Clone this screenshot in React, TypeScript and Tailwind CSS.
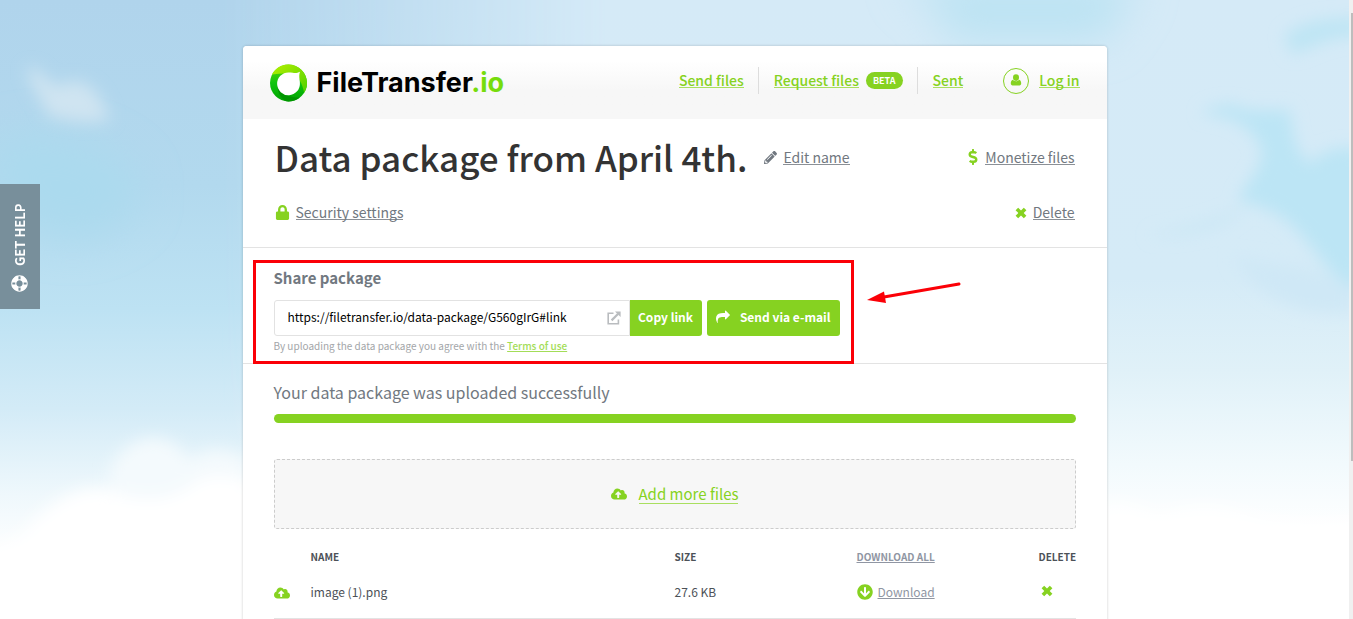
import { FunctionComponent, ReactNode } from "react";
import {
  FaArrowCircleDown,
  FaCloudUploadAlt,
  FaDollarSign,
  FaLifeRing,
  FaLock,
  FaPencilAlt,
} from "react-icons/fa";

interface PackageFile {
  name: string;
  size: string;
}

interface IconProps {
  className?: string;
}

const files: PackageFile[] = [{ name: "image (1).png", size: "27.6 KB" }];

const CrossIcon: FunctionComponent<IconProps> = ({ className }) => (
  <svg viewBox="0 0 12 12" fill="currentColor" className={className}>
    <path d="M3.2.8 6 3.4 8.8.8l2.6 2.4L8.7 6l2.7 2.8-2.6 2.4L6 8.6l-2.8 2.6L.6 8.8 3.3 6 .6 3.2z" />
  </svg>
);

const UserIcon: FunctionComponent<IconProps> = ({ className }) => (
  <svg viewBox="0 0 12 12" fill="currentColor" className={className}>
    <ellipse cx="6" cy="3.6" rx="3" ry="3.300" />
    <path d="M3 5.800C1.200 6.200.8 8 .8 9.600.8 10.800 1.500 11.400 2.500 11.400h7c1 0 1.700-.6 1.700-1.800 0-1.600-.4-3.400-2.200-3.800C8.200 6.800 7.200 7.200 6 7.200S3.800 6.800 3 5.800z" />
  </svg>
);

const ForwardIcon: FunctionComponent<IconProps> = ({ className }) => (
  <svg viewBox="0 0 1792 1792" fill="currentColor" className={className}>
    <path d="M1792 640q0 26-19 45l-512 512q-19 19-45 19t-45-19-19-45v-256h-224q-98 0-175.500 6t-154 21.500-133 42.500-105.500 69.500-80 101-48.500 138.500-17.500 181q0 55 5 123 0 6 2.500 23.500t2.500 26.500q0 15-8.500 25t-23.500 10q-16 0-28-17-7-9-13-22t-13.500-30-10.500-24q-127-285-127-451 0-199 53-333 162-403 875-403h224v-256q0-26 19-45t45-19 45 19l512 512q19 19 19 45z" />
  </svg>
);

const ExternalIcon: FunctionComponent<IconProps> = ({ className }) => (
  <svg
    viewBox="0 0 14 14"
    fill="none"
    stroke="currentColor"
    strokeWidth="1.6"
    className={className}
  >
    <path d="M6.500 2.200H1.200v10.600h10.200V8.500" />
    <path d="M4.600 9.400l6.600-6.600" strokeWidth="2.200" />
    <path d="M8 .4h5.600V6z" fill="currentColor" stroke="none" />
  </svg>
);

const LogoMark: FunctionComponent = () => (
  <svg viewBox="0 0 40 38" className="h-[38px] w-10">
    <defs>
      <linearGradient id="ring" x1="0" y1="0" x2="0" y2="1">
        <stop offset="0" stopColor="#5fd800" />
        <stop offset="0.5" stopColor="#10c410" />
        <stop offset="1" stopColor="#00a300" />
      </linearGradient>
      <linearGradient id="top" x1="0" y1="0" x2="1" y2="1">
        <stop offset="0" stopColor="#b4f000" />
        <stop offset="1" stopColor="#4fd000" />
      </linearGradient>
    </defs>
    <circle cx="19.500" cy="19" r="18.5" fill="url(#ring)" />
    <path
      d="M3 10.500C6 4.500 12 .5 19.500 .5c10.200 0 18.500 8.300 18.500 18.500 0 3.600-1 7-2.800 9.800C34 24 33 20 31 17L28 10 14 9.500C8.500 9.700 6 10 3 10.500z"
      fill="url(#top)"
    />
    <path
      d="M8 19c.5 8 9 15 23 14.500a18.500 18.500 0 0 1-11.500 4C14 37.500 8.500 31 8 19z"
      fill="#009600"
    />
    <path
      d="M31 7.800c-1 3-.8 5-.5 7.700.3 1.300.4 2.500.4 3.500a11.400 11.400 0 1 1-11.400-10.600c1.500 0 2.800.2 4.300.4 2.700.5 4.600.2 7.200-1z"
      fill="#fff"
    />
  </svg>
);

const Sky: FunctionComponent = () => (
  <svg
    viewBox="0 0 1353 619"
    preserveAspectRatio="none"
    className="absolute inset-0 size-full"
    aria-hidden="true"
  >
    <defs>
      <linearGradient id="left" x1="0" y1="0" x2="0" y2="1">
        <stop offset="0" stopColor="#b0d4ec" />
        <stop offset="0.3" stopColor="#b2d9ee" />
        <stop offset="0.5" stopColor="#bde2f3" />
        <stop offset="0.66" stopColor="#d3ebf7" />
        <stop offset="0.8" stopColor="#eff8fc" />
        <stop offset="0.9" stopColor="#fff" />
      </linearGradient>
      <linearGradient id="right" x1="0" y1="0" x2="0" y2="1">
        <stop offset="0" stopColor="#d5eaf7" />
        <stop offset="0.45" stopColor="#d5ebf7" />
        <stop offset="0.6" stopColor="#e0f1f8" />
        <stop offset="0.75" stopColor="#f2fafd" />
        <stop offset="0.86" stopColor="#fff" />
      </linearGradient>
      <linearGradient id="fade" x1="0" y1="0" x2="1" y2="0">
        <stop offset="0.16" stopColor="#fff" stopOpacity="0" />
        <stop offset="0.45" stopColor="#fff" />
      </linearGradient>
      <mask id="toRight">
        <rect width="1353" height="619" fill="url(#fade)" />
      </mask>
      <filter id="soft" x="-30%" y="-30%" width="160%" height="160%">
        <feGaussianBlur stdDeviation="8" />
      </filter>
      <filter id="softer" x="-40%" y="-40%" width="180%" height="180%">
        <feGaussianBlur stdDeviation="20" />
      </filter>
    </defs>
    <rect width="1353" height="619" fill="url(#left)" />
    <rect width="1353" height="619" fill="url(#right)" mask="url(#toRight)" />
    <g filter="url(#softer)">
      <path d="M-10 150c40-30 110-10 140 20 30 40-20 60-50 70-50 0-90-40-90-90z" fill="#abdaee" />
      <path d="M900 -20h240c-14 24-20 40-40 60H940c20-14 0-30-40-60z" fill="#bce3f3" />
    </g>
    <g filter="url(#soft)">
      <path d="M28 68c12-2 16 14 30 18 24-12 40 0 52 34-16 4-40 2-62-4-4-16-22-34-20-48z" fill="#cfe4f1" />
      <path d="M1200 114c20-14 36-10 48-4h42c4 30 6 44 22 54 8-14 30-20 50-14v140c-30-6-44-40-60-54-20-24-40-30-64-36 10-20 24-30 24-50-8-20-24-34-62-36z" fill="#bce5f5" />
      <path d="M1146 236c30-6 70-14 100-30-20 24-60 30-100 30z" fill="#c8e6f4" />
      <path d="M1232 256c30 6 90 12 120 30v26c-40 4-90-6-120-56z" fill="#cfe8f6" />
      <path d="M1284 36c20-16 40-18 80-18v18c-40 0-54 14-72 18z" fill="#bee5f4" />
      <path d="M110 470c20-40 60-40 80-10 20-16 40-10 60 0v60H110z" fill="#f4fafd" />
      <path d="M-20 640v-90c20 0 40-8 50-24 20-22 50-44 80-36 30 14 60 10 80-4 14-14 40-14 70 0v154z" fill="#fff" />
      <path d="M1100 640V506c20-6 40 4 60 10 40-14 70-8 100 4 40 6 70 4 120 0v120z" fill="#fff" />
    </g>
  </svg>
);

interface LinkProps {
  children: ReactNode;
}

const NavLink: FunctionComponent<LinkProps> = ({ children }) => (
  <a
    href="#"
    className="border-b border-[#a9df5f] text-sm leading-[14px] font-medium text-[#86d221]"
  >
    {children}
  </a>
);

const GreyLink: FunctionComponent<LinkProps> = ({ children }) => (
  <a
    href="#"
    className="border-b border-[#8b9096] text-sm leading-[14px] text-[#717880]"
  >
    {children}
  </a>
);

const Header: FunctionComponent = () => (
  <header className="flex h-[73px] items-center justify-between rounded-t bg-linear-to-b from-white from-20% to-[#f7f7f7] to-60% pr-[27px] pl-[26px]">
    <a href="#" className="flex items-center gap-2">
      <LogoMark />
      <span className="font-[Inter,sans-serif] text-[27px] leading-8 font-bold text-black">
        FileTransfer<span className="text-[#76dc0c]">.io</span>
      </span>
    </a>
    <nav className="flex items-center pb-1">
      <NavLink>Send files</NavLink>
      <span className="mr-[15px] ml-[14px] h-[27px] w-px bg-[#ddd]" />
      <NavLink>Request files</NavLink>
      <span className="ml-[7px] rounded-full bg-[#86d221] px-[7px] text-[9px] leading-[17px] font-bold text-white">
        BETA
      </span>
      <span className="mr-[15px] ml-[14px] h-[27px] w-px bg-[#ddd]" />
      <NavLink>Sent</NavLink>
      <span className="mr-[10px] ml-10 flex size-[26px] items-center justify-center rounded-full border border-[#86d221]">
        <UserIcon className="mb-px size-3 text-[#86d221]" />
      </span>
      <NavLink>Log in</NavLink>
    </nav>
  </header>
);

const PackageInfo: FunctionComponent = () => (
  <section className="h-[129px] border-b border-[#e3e3e3] px-8 pt-[15px]">
    <div className="flex items-center justify-between">
      <div className="flex items-center">
        <h1 className="text-[35px] leading-[46px] font-medium text-[#333]">
          Data package from April 4th.
        </h1>
        <FaPencilAlt className="mr-[6px] ml-[17px] size-[13px] text-[#717880]" />
        <GreyLink>Edit name</GreyLink>
      </div>
      <div className="flex items-center">
        <FaDollarSign className="mr-1 size-4 text-[#86d221]" />
        <GreyLink>Monetize files</GreyLink>
      </div>
    </div>
    <div className="mt-[25px] flex items-center justify-between">
      <div className="flex items-center">
        <FaLock className="mr-[6px] size-[15px] text-[#86d221]" />
        <GreyLink>Security settings</GreyLink>
      </div>
      <div className="flex items-center">
        <CrossIcon className="mr-[6px] size-3 text-[#86d221]" />
        <GreyLink>Delete</GreyLink>
      </div>
    </div>
  </section>
);

const SharePackage: FunctionComponent = () => (
  <section className="relative h-[116px] border-b border-[#e3e3e3] px-[31px] pt-5">
    <h2 className="text-[15px] leading-5 font-bold text-[#717880]">
      <label htmlFor="share-link">Share package</label>
    </h2>
    <div className="mt-3 flex">
      <div className="flex h-9 w-[356px] items-center rounded-l-[3px] border border-[#e2e2e2] bg-white pr-2 pl-[13px] text-[#b9bcbf]">
        <input
          id="share-link"
          readOnly
          value="https://filetransfer.io/data-package/G560gIrG#link"
          className="min-w-0 flex-1 pb-[2px] text-xs leading-5 text-black outline-none"
        />
        <ExternalIcon className="size-[14px]" />
      </div>
      <button className="h-9 w-[72px] rounded-r-[3px] bg-[#86d221] pb-[2px] text-xs font-bold text-white">
        Copy link
      </button>
      <button className="ml-[5px] flex h-9 w-[133px] items-center justify-between rounded-[3px] bg-[#86d221] px-[9px] pb-[2px] text-xs font-bold text-white">
        <ForwardIcon className="size-[14px]" />
        Send via e-mail
      </button>
    </div>
    <p className="mt-[2px] text-[10px] leading-4 text-[#a3a6a9]">
      By uploading the data package you agree with the{" "}
      <a href="#" className="font-medium text-[#a3dd58] underline">
        Terms of use
      </a>
    </p>
    <div className="pointer-events-none absolute top-3 left-[10px] h-[104px] w-[601px] border-3 border-[#fb0007]" />
    <svg
      viewBox="0 0 96 24"
      className="pointer-events-none absolute top-8 left-[624px] h-6 w-24"
    >
      <path d="M14 17.500 92 4" stroke="#fb0007" strokeWidth="3" strokeLinecap="round" />
      <path d="M0 20 17 11.500 19 23z" fill="#fb0007" />
    </svg>
  </section>
);

const FileTable: FunctionComponent = () => (
  <table className="w-full table-fixed text-left text-[#4c5157]">
    <thead>
      <tr className="h-[54px] text-[10px]">
        <th className="w-[37px]" />
        <th className="font-bold">NAME</th>
        <th className="w-[182px] font-bold">SIZE</th>
        <th className="w-[182px] font-bold">
          <a href="#" className="text-[#9096a3] underline">
            DOWNLOAD ALL
          </a>
        </th>
        <th className="w-[37px] font-bold">DELETE</th>
      </tr>
    </thead>
    <tbody>
      {files.map((file) => (
        <tr key={file.name} className="h-9 border-b-2 border-[#e3e3e3] text-xs">
          <td className="pb-4">
            <FaCloudUploadAlt className="size-4 text-[#86d221]" />
          </td>
          <td className="pb-[18px]">{file.name}</td>
          <td className="pb-[18px]">{file.size}</td>
          <td className="pb-[18px]">
            <a href="#" className="flex items-center gap-[5px] text-[#9096a3] underline">
              <FaArrowCircleDown className="size-4 text-[#86d221]" />
              Download
            </a>
          </td>
          <td className="pb-5">
            <button aria-label={`Delete ${file.name}`} className="ml-[2px] block">
              <CrossIcon className="size-3 text-[#86d221]" />
            </button>
          </td>
        </tr>
      ))}
    </tbody>
  </table>
);

const App: FunctionComponent = () => (
  <div className="relative h-screen overflow-hidden bg-white pr-1 font-['Noto_Sans_CJK_SC',sans-serif]">
    <Sky />
    <a
      href="#"
      className="absolute top-[184px] left-0 flex h-[125px] w-10 rotate-180 items-center gap-[9px] bg-[#788f9b] pt-[17px] text-[13px] font-bold text-white [writing-mode:vertical-rl]"
    >
      <FaLifeRing className="size-[17px] rotate-45" />
      GET HELP
    </a>
    <main className="relative mx-auto mt-[46px] min-h-screen w-[864px] max-w-full rounded bg-white shadow-[0_0_3px_rgba(0,0,0,0.2)]">
      <Header />
      <PackageInfo />
      <SharePackage />
      <section className="px-[31px] pt-[18px]">
        <p className="text-base leading-5 text-[#717880]">
          Your data package was uploaded successfully
        </p>
        <div className="mt-3 h-[9px] rounded-full bg-[#86d221]" />
        <div className="mt-9 flex h-[70px] items-center justify-center gap-3 rounded-[3px] border border-dashed border-[#ccc] bg-[#f7f7f7]">
          <FaCloudUploadAlt className="size-4 text-[#86d221]" />
          <a
            href="#"
            className="border-b border-[#a9df5f] text-[15px] leading-[18px] text-[#86d221]"
          >
            Add more files
          </a>
        </div>
        <FileTable />
      </section>
    </main>
    <div className="absolute inset-y-0 right-0 w-1 bg-[#f0f0f0] pt-[13px] pl-[2px]">
      <div className="h-[74%] bg-[#bdbdbd]" />
    </div>
  </div>
);

export default App;
